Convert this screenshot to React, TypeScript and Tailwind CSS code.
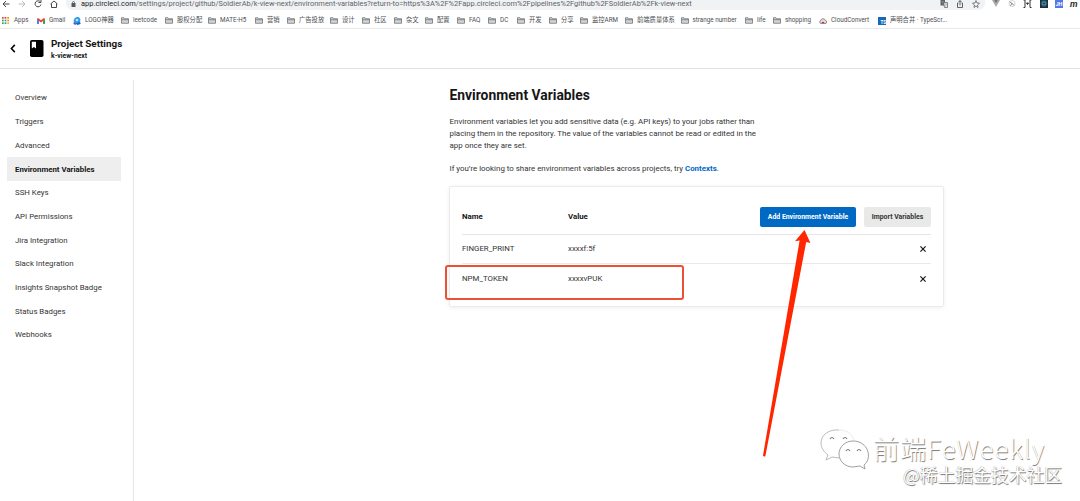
import type { ReactNode } from "react";

// ---------------------------------------------------------------------------
// Data
// ---------------------------------------------------------------------------

type BookmarkIcon = "apps" | "gmail" | "logo" | "folder" | "cloud" | "ts";

interface Bookmark {
  icon: BookmarkIcon;
  label: string;
  width: string;
}

const BOOKMARKS: Bookmark[] = [
  { icon: "apps", label: "Apps", width: "w-[35px]" },
  { icon: "gmail", label: "Gmail", width: "w-[36px]" },
  { icon: "logo", label: "LOGO神器", width: "w-[48px]" },
  { icon: "folder", label: "leetcode", width: "w-[44px]" },
  { icon: "folder", label: "股权分配", width: "w-[43px]" },
  { icon: "folder", label: "MATE-H5", width: "w-[47px]" },
  { icon: "folder", label: "营销", width: "w-[32px]" },
  { icon: "folder", label: "广告投放", width: "w-[43px]" },
  { icon: "folder", label: "设计", width: "w-[32px]" },
  { icon: "folder", label: "社区", width: "w-[32px]" },
  { icon: "folder", label: "杂文", width: "w-[31px]" },
  { icon: "folder", label: "配置", width: "w-[32px]" },
  { icon: "folder", label: "FAQ", width: "w-[31px]" },
  { icon: "folder", label: "DC", width: "w-[29px]" },
  { icon: "folder", label: "开发", width: "w-[32px]" },
  { icon: "folder", label: "分享", width: "w-[31px]" },
  { icon: "folder", label: "监控ARM", width: "w-[45px]" },
  { icon: "folder", label: "前端质量体系", width: "w-[55.5px]" },
  { icon: "folder", label: "strange number", width: "w-[64.5px]" },
  { icon: "folder", label: "life", width: "w-[28px]" },
  { icon: "folder", label: "shopping", width: "w-[46px]" },
  { icon: "cloud", label: "CloudConvert", width: "w-[59px]" },
  { icon: "ts", label: "声明合并 · TypeScr...", width: "w-[80px]" },
];

const NAV_ITEMS = [
  "Overview",
  "Triggers",
  "Advanced",
  "Environment Variables",
  "SSH Keys",
  "API Permissions",
  "Jira Integration",
  "Slack Integration",
  "Insights Snapshot Badge",
  "Status Badges",
  "Webhooks",
];

const VARIABLES = [
  { name: "FINGER_PRINT", value: "xxxxf:5f" },
  { name: "NPM_TOKEN", value: "xxxxvPUK" },
];

// ---------------------------------------------------------------------------
// Icons
// ---------------------------------------------------------------------------

function Stroke({ className, children }: { className: string; children: ReactNode }) {
  return (
    <svg
      viewBox="0 0 16 16"
      className={`shrink-0 ${className}`}
      fill="none"
      stroke="currentColor"
      strokeWidth="2"
    >
      {children}
    </svg>
  );
}

function BookmarkGlyph({ icon }: { icon: BookmarkIcon }) {
  if (icon === "apps") {
    const colors = ["#ea4335", "#ea4335", "#f29900", "#34a853", "#4285f4", "#f29900", "#34a853", "#34a853", "#fbbc04"];
    return (
      <svg viewBox="0 0 9 9" className="mr-[5px] h-[7px] w-[7px] shrink-0">
        {colors.map((c, i) => (
          <rect key={i} x={(i % 3) * 3.4} y={Math.floor(i / 3) * 3.4} width="2.2" height="2.2" fill={c} />
        ))}
      </svg>
    );
  }
  if (icon === "gmail") {
    return (
      <svg viewBox="0 0 16 12" className="mr-[4px] h-[6px] w-[8px] shrink-0">
        <path d="M0 2v9a1 1 0 0 0 1 1h3V5z" fill="#4285f4" />
        <path d="M16 2v9a1 1 0 0 1-1 1h-3V5z" fill="#34a853" />
        <path d="M0 2C0 0 2 0 3 .7L8 4.5 13 .7c1-.7 3-.7 3 1.3v1l-8 6-8-6z" fill="#ea4335" />
      </svg>
    );
  }
  if (icon === "logo") {
    return (
      <svg viewBox="0 0 16 16" className="mr-[4px] h-[8px] w-[8px] shrink-0">
        <path d="M2 12C0 5 4 0 9 0s7 5 5 10l1 4-5-1-6 2z" fill="#2f9bea" />
        <path d="M1 11l5 2-1 3-4-2z" fill="#7b3fc4" />
        <circle cx="8" cy="6" r="2.6" fill="#a9ecf8" />
        <path d="M5 13l9-3 1 4-6 2z" fill="#1764c8" />
      </svg>
    );
  }
  if (icon === "cloud") {
    return (
      <svg viewBox="0 0 16 12" className="mr-[4px] h-[6px] w-[8px] shrink-0">
        <path
          d="M4 11a3 3 0 0 1-.6-5.8A4.8 4.8 0 0 1 12.7 5 3 3 0 0 1 12 11z"
          fill="#e9dcdd"
          stroke="#77656a"
          strokeWidth="1.5"
        />
        <path d="M5.5 10a2.5 2.5 0 0 1 5 0z" fill="#b4333d" />
      </svg>
    );
  }
  if (icon === "ts") {
    return (
      <span className="mr-[4px] flex h-[8px] w-[8px] shrink-0 items-end justify-end bg-[#1769b5] text-[4.5px] font-bold leading-[5px] text-white">
        TS
      </span>
    );
  }
  return (
    <svg viewBox="0 0 16 14" className="mr-[4px] h-[7px] w-[8px] shrink-0" fill="#d3d4d6" stroke="#707377" strokeWidth="1.6">
      <path d="M1 1.5h5l1.5 2H15v9H1z" />
      <path d="M1 5.5h14" />
    </svg>
  );
}

function BookIcon() {
  return (
    <svg viewBox="0 0 14 17" className="h-[17px] w-[14px] shrink-0">
      <rect width="13.5" height="17" rx="1.8" fill="#000" />
      <path d="M1.8 1.7h4.200v6.800L3.900 7 1.800 8.500z" fill="#fff" />
    </svg>
  );
}

function CloseIcon() {
  return (
    <svg viewBox="0 0 6 6" className="mr-[5.5px] h-[6px] w-[6px]" stroke="#161616" strokeWidth="1.2">
      <path d="M.4.4l5.2 5.2M5.6.4L.4 5.6" />
    </svg>
  );
}

// ---------------------------------------------------------------------------
// Browser chrome
// ---------------------------------------------------------------------------

function AddressBar() {
  return (
    <div className="flex h-[12px] shrink-0 overflow-hidden text-[#5f6368]">
      <div className="flex w-[66px] shrink-0 items-start">
        <Stroke className="ml-[2px] h-[8px] w-[8px] text-[#46494d]">
          <path d="M15 8H2M8 2L2 8l6 6" />
        </Stroke>
        <Stroke className="ml-[8px] h-[8px] w-[8px] text-[#b9bbbe]">
          <path d="M1 8h13M8 2l6 6-6 6" />
        </Stroke>
        <Stroke className="ml-[8px] h-[8px] w-[8px] text-[#46494d]">
          <path d="M13 4a6 6 0 1 0 1 5M14 0v5H9" />
        </Stroke>
        <Stroke className="ml-[8px] h-[8px] w-[8px] text-[#46494d]">
          <path d="M1 8l7-6 7 6M3 7v8h10V7" />
        </Stroke>
      </div>
      <div className="flex h-[10px] w-[919px] shrink-0 items-start rounded-b-[7px] bg-[#f0f2f4]">
        <svg viewBox="0 0 10 12" className="ml-[5px] mt-px h-[6px] w-[5px] shrink-0" fill="#55585c">
          <rect x="1" y="4" width="8" height="8" rx="1" />
          <path d="M3 5V3a2 2 0 0 1 4 0v2" fill="none" stroke="#55585c" strokeWidth="1.5" />
        </svg>
        <span className="ml-[5px] w-[850px] whitespace-nowrap text-[7.4px] leading-[8px] tracking-[0.035px]">
          <span className="text-[#202124]">app.circleci.com</span>
          /settings/project/github/SoldierAb/k-view-next/environment-variables?return-to=https%3A%2F%2Fapp.circleci.com%2Fpipelines%2Fgithub%2FSoldierAb%2Fk-view-next
        </span>
        <svg viewBox="0 0 16 16" className="ml-[9px] h-[8px] w-[8px] shrink-0">
          <path d="M1 0h9v11H1z" fill="#5f6368" />
          <path d="M7 5h8v10H9z" fill="#e3e5e7" stroke="#5f6368" strokeWidth="1.5" />
          <path d="M3 3h5M5 3v5M9 8h5M10 13l3-5" stroke="#999" />
        </svg>
        <Stroke className="ml-[8px] h-[8px] w-[8px]">
          <path d="M5 6H3v9h10V6h-2M8 11V1M5 4l3-3 3 3" />
        </Stroke>
        <Stroke className="ml-[8px] h-[8px] w-[8px]">
          <path d="M8 1l2 5 5 .4-4 3.6 1 5-4-3-4 3 1-5-4-3.6L6 6z" strokeWidth="1.6" />
        </Stroke>
      </div>
      <div className="flex items-start pl-[7px]">
        <svg viewBox="0 0 14 12" className="h-[7px] w-[8px] shrink-0">
          <path d="M0 0h14L7 12z" fill="#a9abad" />
          <path d="M4 0h6L7 5z" fill="#6d7073" />
        </svg>
        <Stroke className="ml-[8px] h-[8px] w-[8px] text-[#d2d4d6]">
          <circle cx="8" cy="7" r="6" />
          <path d="M3 3l5 5M7 5l5 6M4 11l5-3" stroke="#96999c" />
        </Stroke>
        <svg viewBox="0 0 18 16" className="ml-[7px] h-[8px] w-[9px] shrink-0" fill="none" stroke="#333" strokeWidth="2">
          <path d="M1 0h3v15H1M17 0h-3v15h3" />
          <path d="M7 6h4L9 9z" fill="#333" />
        </svg>
        <svg viewBox="0 0 16 16" className="ml-[8px] h-[8px] w-[8px] shrink-0">
          <path d="M0 0h16v16H0z" fill="#202c36" />
          <g fill="none" stroke="#42a9c4">
            <ellipse cx="8" cy="7" rx="6" ry="2.5" />
            <ellipse cx="8" cy="7" rx="6" ry="2.5" transform="rotate(60 8 7)" />
            <ellipse cx="8" cy="7" rx="6" ry="2.5" transform="rotate(120 8 7)" />
          </g>
        </svg>
        <span className="ml-[7px] h-[8px] w-[8px] shrink-0 bg-[#5277e8] text-center text-[5.5px] font-bold leading-[8px] text-white">
          JH
        </span>
        <span className="ml-[7px] text-[9px] font-bold italic leading-[8px] text-[#303030]">m</span>
      </div>
    </div>
  );
}

function BookmarkBar() {
  return (
    <div className="flex h-[17px] shrink-0 items-center overflow-hidden border-b border-[#e8e9ea] pl-[2px] pt-px text-[6.3px] leading-[9px] text-[#4b4e52]">
      {BOOKMARKS.map((b) => (
        <div key={b.label} className={`flex shrink-0 items-center whitespace-nowrap ${b.width}`}>
          <BookmarkGlyph icon={b.icon} />
          <span>{b.label}</span>
        </div>
      ))}
    </div>
  );
}

// ---------------------------------------------------------------------------
// Settings page
// ---------------------------------------------------------------------------

function ProjectHeader() {
  return (
    <header className="flex h-[40px] shrink-0 items-center border-b border-[#e2e2e2]">
      <svg viewBox="0 0 6 10" className="ml-[10px] h-[9px] w-[6px]" fill="none" stroke="#000" strokeWidth="1.7">
        <path d="M5 1L1.2 5 5 9" />
      </svg>
      <div className="ml-[14px]">
        <BookIcon />
      </div>
      <div className="ml-[7px] pt-[2px]">
        <h1 className="text-[9.9px] font-bold leading-[12px] text-[#161616]">Project Settings</h1>
        <p className="text-[6.8px] font-bold leading-[12px] text-[#161616]">k-view-next</p>
      </div>
    </header>
  );
}

function Sidebar() {
  return (
    <nav className="mt-[11px] w-[134px] shrink-0 border-r border-[#e5e5e5] pl-[7px] pt-[6px]">
      {NAV_ITEMS.map((item) => (
        <div
          key={item}
          className={`flex h-[23.7px] w-[114px] items-center pl-[8px] pt-px text-[7.85px] ${
            item === "Environment Variables" ? "bg-[#eee] font-bold text-[#161616]" : "text-[#343434]"
          }`}
        >
          {item}
        </div>
      ))}
    </nav>
  );
}

function VariablesCard() {
  return (
    <section className="relative -ml-[0.5px] mt-[11px] h-[121px] w-[495px] rounded-[2px] border border-[#ebebeb] px-[12px] pt-[12px] shadow-[0_1px_4px_rgba(0,0,0,0.07)]">
      <div className="flex h-[36px] items-center border-b border-[#e6e6e6] text-[7.85px] font-bold text-[#161616]">
        <span className="w-[106px]">Name</span>
        <span className="w-[192px]">Value</span>
        <button className="h-[20px] w-[96px] rounded-[2px] bg-[#0069c4] pt-px text-[6.9px] font-bold text-white">
          Add Environment Variable
        </button>
        <button className="ml-[8px] h-[20px] w-[67px] rounded-[2px] bg-[#e9e9e9] pt-px text-[6.9px] font-bold text-[#343434]">
          Import Variables
        </button>
      </div>
      {VARIABLES.map((v) => (
        <div
          key={v.name}
          className="flex h-[29.3px] items-center border-b border-[#e9e9e9] text-[7.85px] text-[#343434] last-of-type:border-b-0"
        >
          <span className="w-[106px]">{v.name}</span>
          <span className="flex-1">{v.value}</span>
          <CloseIcon />
        </div>
      ))}
      {/* Highlight around the token row */}
      <span className="pointer-events-none absolute -left-[5px] top-[78px] h-[35px] w-[239px] rounded-[3px] border-2 border-[#ec5035]" />
    </section>
  );
}

function Arrow() {
  return (
    <svg viewBox="0 0 50 230" className="pointer-events-none absolute left-[762px] top-[229px] h-[230px] w-[50px]">
      <path d="M42.5 1L33 12.2l4.600-.7L1 226.500q.8 1.800 2.400.5L44.200 13l4.200 1z" fill="#ff2600" />
    </svg>
  );
}

function Watermark() {
  return (
    <div className="pointer-events-none absolute left-[820px] top-[427px] h-[62px] w-[250px] whitespace-nowrap">
      <svg viewBox="0 0 50 44" className="absolute left-0 top-0 h-[44px] w-[50px]" fill="#fff" strokeWidth=".8">
        <path d="M19 3C9 2 1 8 1 16c0 5 3 9 7 12l-2 5 6-3 7 1" stroke="#aaa" />
        <path d="M34 13C32 7 27 3 19 3" stroke="#e4e4e4" />
        <path d="M33 14c-8 0-14 6-14 13s6 13 14 13l7-1 5 3-1-4c9-7 4-24-11-24z" stroke="#888" />
        <path d="M10 12q2-3 4 0M23 12q2-3 4 0M26 24q2-3 4 0M37 24q2-3 4 0" fill="none" stroke="#777" strokeWidth="1.1" />
      </svg>
      <span className="absolute left-[53px] top-[7px] text-[26.3px] font-light leading-[28px] tracking-[0.75px] text-white [font-family:'Noto_Sans_CJK_SC',sans-serif] [text-shadow:0.7px_0.7px_0.7px_#777]">
        前端FeWeekly
      </span>
      <span className="absolute left-[83px] top-[37px] text-[17.8px] leading-[20px] text-white [font-family:'Noto_Sans_CJK_SC',sans-serif] [text-shadow:0.8px_0.8px_0.8px_#777,-0.3px_-0.3px_0.8px_#aaa]">
        @稀土掘金技术社区
      </span>
    </div>
  );
}

export default function App() {
  return (
    <div className="relative flex h-[501px] w-[1080px] flex-col overflow-hidden bg-white [font-family:Roboto,'Noto_Sans_CJK_SC',sans-serif]">
      <AddressBar />
      <BookmarkBar />
      <ProjectHeader />
      <div className="flex flex-1">
        <Sidebar />
        <main className="ml-[315.5px] mt-[16px]">
          <h2 className="text-[13.85px] font-bold leading-[20px] text-[#161616]">Environment Variables</h2>
          <p className="mt-[11px] text-[7.93px] leading-[12px] text-[#343434]">
            Environment variables let you add sensitive data (e.g. API keys) to your jobs rather than
            <br />
            placing them in the repository. The value of the variables cannot be read or edited in the
            <br />
            app once they are set.
          </p>
          <p className="mt-[11px] text-[7.9px] leading-[12px] text-[#343434]">
            If you’re looking to share environment variables across projects, try{" "}
            <a className="font-bold text-[#0069c4]">Contexts</a>.
          </p>
          <VariablesCard />
        </main>
      </div>
      <Arrow />
      <Watermark />
    </div>
  );
}
